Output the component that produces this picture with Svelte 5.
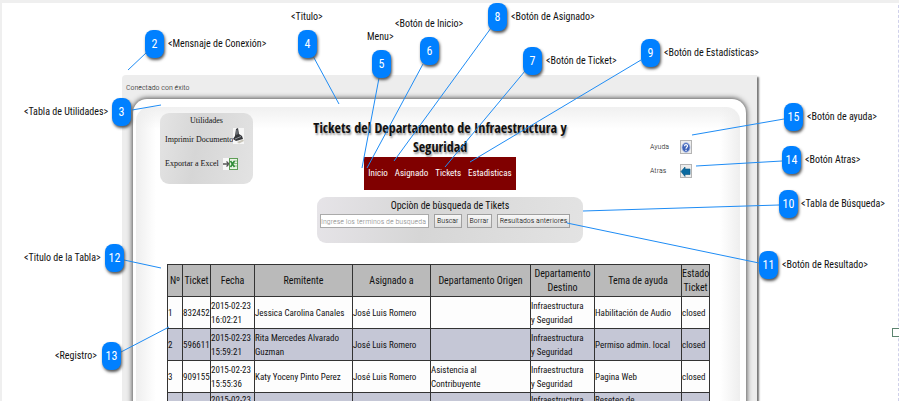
<script>
  const pins = [
    { n: 2, x: 145, y: 30, label: '<Mensnaje de Conexión>', lx: 168, ly: 36, line: [146, 53, 128, 70] },
    { n: 3, x: 112, y: 98, label: '<Tabla de Utilidades>', lx: 24, ly: 104, line: [132, 110, 161, 105] },
    { n: 4, x: 298, y: 30, label: '<Titulo>', lx: 291, ly: 9, line: [313, 56, 339, 104] },
    { n: 5, x: 372, y: 50, label: 'Menu>', lx: 367, ly: 29, line: [379, 78, 362, 168] },
    { n: 6, x: 420, y: 37, label: '<Botón de Inicio>', lx: 395, ly: 16, line: [423, 64, 367, 168] },
    { n: 7, x: 523, y: 47, label: '<Botón de Ticket>', lx: 546, ly: 53, line: [525, 71, 445, 167] },
    { n: 8, x: 488, y: 3, label: '<Botón de Asignado>', lx: 511, ly: 9, line: [491, 28, 394, 161] },
    { n: 9, x: 641, y: 39, label: '<Botón de Estadísticas>', lx: 664, ly: 45, line: [641, 60, 470, 162] },
    { n: 10, x: 779, y: 190, label: '<Tabla de Búsqueda>', lx: 801, ly: 196, line: [779, 205, 583, 211] },
    { n: 11, x: 759, y: 251, label: '<Botón de Resultado>', lx: 782, ly: 257, line: [759, 263, 567, 223] },
    { n: 12, x: 105, y: 244, label: '<Titulo de la Tabla>', lx: 24, ly: 250, line: [124, 260, 161, 268] },
    { n: 13, x: 102, y: 342, label: '<Registro>', lx: 55, ly: 348, line: [121, 352, 169, 327] },
    { n: 14, x: 782, y: 146, label: '<Botón Atras>', lx: 805, ly: 152, line: [782, 161, 696, 166] },
    { n: 15, x: 784, y: 103, label: '<Botón de ayuda>', lx: 807, ly: 109, line: [784, 119, 692, 135] }
  ];

  const columns = [
    ['Nº', 15], ['Ticket', 28], ['Fecha', 44], ['Remitente', 98], ['Asignado a', 78],
    ['Departamento Origen', 100], ['Departamento Destino', 64], ['Tema de ayuda', 87], ['Estado Ticket', 28]
  ];
  const total = columns.reduce((sum, c) => sum + c[1], 0);

  const rows = [
    ['1', '832452', ['2015-02-23', '16:02:21'], 'Jessica Carolina Canales', 'José Luis Romero', '', ['Infraestructura', 'y Seguridad'], 'Habilitación de Audio', 'closed'],
    ['2', '596611', ['2015-02-23', '15:59:21'], ['Rita Mercedes Alvarado', 'Guzman'], 'José Luis Romero', '', ['Infraestructura', 'y Seguridad'], 'Permiso admin. local', 'closed'],
    ['3', '909155', ['2015-02-23', '15:55:36'], 'Katy Yoceny Pinto Perez', 'José Luis Romero', ['Asistencia al', 'Contribuyente'], ['Infraestructura', 'y Seguridad'], 'Pagina Web', 'closed'],
    ['', '', '2015-02-23', '', '', '', 'Infraestructura', 'Reseteo de', '']
  ];
</script>

<div class="page">
  <main class="window">
    <p class="status">Conectado con éxito</p>
    <div class="frame">
      <div class="sheet">
        <header>
          <section class="tools">
            <h2>Utilidades</h2>
            <a href="#imprimir">Imprimir Documento
              <svg class="printer" width="11" height="16" viewBox="0 0 11 16" aria-hidden="true">
                <rect width="11" height="16" fill="#f6f6f6" />
                <path d="M3 1 5 0 6 6 9 8 10 11 3 13 0 11 2 8Z" fill="#34363a" />
                <path d="M3 2 4.500 1.500 5.500 6 3 7Z" fill="#666a70" />
                <path d="M2 11 8 8.500" stroke="#92969c" />
                <path d="M4 14 10 11.500 11 13 6 15.500Z" fill="#c9c5b8" />
              </svg>
            </a>
            <a href="#excel" class="excel">Exportar a Excel
              <svg width="15" height="12" viewBox="0 0 15 12" aria-hidden="true">
                <rect width="15" height="12" fill="#f8f8f8" />
                <path d="M0 6h5M3.500 3.500 6 6 3.500 8.500" stroke="#555" fill="none" stroke-width="1.300" />
                <rect x="6.500" y="0.500" width="8" height="11" fill="#e9f5e4" stroke="#5e9d57" />
                <path d="M11 3h3M11 5.500h3M11 8h3" stroke="#8cba85" />
                <path d="M7.500 3 11.500 9M11.500 3 7.500 9" stroke="#2e8b35" stroke-width="1.600" />
              </svg>
            </a>
          </section>

          <div class="center">
            <div class="banner">
              <h1>Tickets del Departamento de Infraestructura y Seguridad</h1>
              <nav>
                <a href="#inicio">Inicio</a>
                <a href="#asignado">Asignado</a>
                <a href="#tickets">Tickets</a>
                <a href="#estadisticas">Estadìsticas</a>
              </nav>
            </div>
            <form class="search" onsubmit={(e) => e.preventDefault()}>
              <label for="terms">Opciòn de bùsqueda de Tikets</label>
              <div class="controls">
                <input id="terms" type="text" placeholder="Ingrese los terminos de busqueda" />
                <button type="submit">Buscar</button>
                <button type="reset">Borrar</button>
                <button type="button">Resultados anteriores</button>
              </div>
            </form>
          </div>

          <div class="side">
            <a href="#ayuda"><span>Ayuda</span>
              <svg width="12" height="14" viewBox="0 0 12 14" aria-hidden="true">
                <rect x="0.500" y="0.500" width="11" height="13" fill="#ececec" stroke="#b4b4b4" />
                <ellipse cx="6" cy="7.500" rx="4" ry="4.700" fill="#3e63b8" stroke="#9fb2df" stroke-width="0.800" />
                <path d="M4.500 6.200C4.500 4.200 7.600 4.200 7.500 6.100 7.500 7.300 6 7.200 6 8.700M6 9.700v1.200" stroke="#fff" fill="none" stroke-width="1.200" />
              </svg>
            </a>
            <a href="#atras"><span>Atras</span>
              <svg width="12" height="14" viewBox="0 0 12 14" aria-hidden="true">
                <rect x="0.500" y="0.500" width="11" height="13" fill="#ececec" stroke="#b4b4b4" />
                <path d="M1 7.500 5 3v2h5v5.500H5v2Z" fill="#0b6aa0" stroke="#075580" stroke-width="0.600" />
              </svg>
            </a>
          </div>
        </header>

        <table>
          <colgroup>
            {#each columns as [, w]}
              <col style="width: {(w / total) * 100}%" />
            {/each}
          </colgroup>
          <thead>
            <tr>
              {#each columns as [name]}<th scope="col">{name}</th>{/each}
            </tr>
          </thead>
          <tbody>
            {#each rows as row}
              <tr>
                {#each row as cell}
                  <td>{#if Array.isArray(cell)}{cell[0]}<br />{cell[1]}{:else}{cell}{/if}</td>
                {/each}
              </tr>
            {/each}
          </tbody>
        </table>
      </div>
    </div>
  </main>

  <div class="notes">
    <svg class="lines" aria-hidden="true">
      {#each pins as { line: [x1, y1, x2, y2] }}
        <line {x1} {y1} {x2} {y2} />
      {/each}
    </svg>
    {#each pins as p}
      <span class="pin" style="left: {p.x}px; top: {p.y}px">{p.n}</span>
      <span class="label" style="left: {p.lx}px; top: {p.ly}px">{p.label}</span>
    {/each}
    <span class="handle"></span>
  </div>
</div>

<style>
  :global(body) {
    margin: 0;
    background: #fff;
  }
  .page {
    position: relative;
    box-sizing: border-box;
    height: 100vh;
    overflow: hidden;
    border-top: 3px solid #efefef;
    border-left: 2px solid #efefef;
    padding: 72px 142px 0 120px;
    font-family: 'Roboto Condensed', 'Liberation Sans', sans-serif;
    font-size: 10px;
    line-height: 14px;
    color: #111;
  }
  h1, h2, p {
    margin: 0;
  }
  a {
    color: inherit;
    text-decoration: none;
  }
  svg {
    display: block;
    flex: none;
  }
  .window {
    background: #ededed;
    border-radius: 4px 0 0 0;
    box-shadow: 2px 2px 2px #777;
    padding: 0 11px;
  }
  .status {
    margin-left: -7px;
    padding: 6px 0 4px;
    font-size: 8px;
    font-weight: 300;
  }
  .frame {
    background: #fff;
    border-radius: 14px 14px 0 0;
    box-shadow: 0 0 5px 1px #555;
    padding: 8px 6px 0 3px;
  }
  .sheet {
    border-radius: 14px 14px 0 0;
    padding: 6px 30px 0 24px;
    background:
      linear-gradient(90deg, #eee, transparent 20px),
      linear-gradient(270deg, #eee, transparent 20px),
      linear-gradient(#f0f0f0, #fff 22px);
  }
  header {
    display: grid;
    grid-template-columns: 93px 1fr 60px;
  }
  .tools {
    box-sizing: border-box;
    height: 71px;
    padding: 1px 5px;
    border-radius: 9px;
    background: linear-gradient(100deg, #e4e4e4, #d6d6d6 40%, #e3e3e3);
    font-family: 'Liberation Serif', serif;
    font-size: 8px;
  }
  .tools h2 {
    font-size: 8px;
    font-weight: 400;
    text-align: center;
  }
  .tools a {
    display: flex;
    align-items: center;
    height: 24px;
    white-space: nowrap;
  }
  .printer {
    margin-bottom: 8px;
  }
  .excel {
    gap: 4px;
  }
  .center {
    display: flex;
    flex-direction: column;
    align-items: center;
    padding-right: 3px;
  }
  .banner {
    display: flex;
    flex-direction: column;
    align-items: center;
    padding-right: 20px;
  }
  h1 {
    width: 260px;
    padding-top: 5px;
    font-family: 'Open Sans Condensed', 'Roboto Condensed', sans-serif;
    font-size: 14px;
    line-height: 19px;
    text-align: center;
    text-shadow: 1px 2px 2px #999;
  }
  nav {
    display: flex;
    justify-content: center;
    gap: 7px;
    margin-top: 1px;
    padding: 0 4px;
    background: #800000;
    color: #fff;
    font-size: 9px;
    line-height: 33px;
  }
  .search {
    box-sizing: border-box;
    width: 266px;
    height: 46px;
    margin-top: 7px;
    padding: 2px 3px;
    border-radius: 9px;
    background: linear-gradient(100deg, #e6e4e8, #d6d6d6 40%, #e3e3e3);
    text-align: center;
  }
  .search label {
    display: block;
  }
  .controls {
    display: flex;
    gap: 5px;
    margin-top: 1px;
  }
  input, button {
    box-sizing: border-box;
    height: 14px;
    font: inherit;
    font-size: 8px;
    line-height: 12px;
    padding: 0 2px;
    white-space: nowrap;
  }
  input {
    width: 109px;
    padding: 0;
    border: 1px solid #aaa;
    background: #fff;
    font-weight: 300;
  }
  input::placeholder {
    color: #888;
  }
  button {
    border: 1px solid #a0a0a0;
    background: linear-gradient(#f8f8f8, #ddd);
    color: #000;
    font-weight: 300;
  }
  .side {
    display: flex;
    flex-direction: column;
    gap: 10px;
    padding: 27px 18px 0 0;
    font-size: 8px;
    font-weight: 300;
  }
  .side a {
    display: flex;
    justify-content: space-between;
    align-items: center;
  }
  table {
    width: calc(100% - 7px);
    margin: 21px 0 0 7px;
    border-collapse: collapse;
    table-layout: fixed;
    font-size: 9px;
    line-height: 14px;
  }
  th, td {
    height: 31px;
    padding: 0;
    border: 1px solid #333;
    text-align: left;
    font-weight: 400;
    white-space: nowrap;
  }
  th {
    background: #bababa;
    font-size: 10px;
    text-align: center;
    white-space: normal;
  }
  td {
    background: #fdfdfd;
  }
  tbody tr:nth-child(even) td {
    background: #c5c7d6;
  }
  tbody tr:last-child td {
    vertical-align: top;
  }
  .notes {
    position: absolute;
    inset: -3px 0 0 -2px;
    pointer-events: none;
    border-right: 1px dashed #cfd0ea;
  }
  .lines {
    position: absolute;
    width: 100%;
    height: 100%;
    stroke: #1e8cf5;
  }
  .pin, .label, .handle {
    position: absolute;
  }
  .pin {
    width: 19px;
    border-radius: 8px;
    background: #0080ff;
    box-shadow: 1px 2px 3px #555;
    color: #fff;
    font-size: 12px;
    line-height: 28px;
    text-align: center;
  }
  .label {
    font-size: 10px;
    line-height: 16px;
    white-space: nowrap;
  }
  .handle {
    right: -2px;
    top: 328px;
    width: 6px;
    height: 7px;
    border: 1px solid #5c8470;
    background: #fff;
  }
</style>
